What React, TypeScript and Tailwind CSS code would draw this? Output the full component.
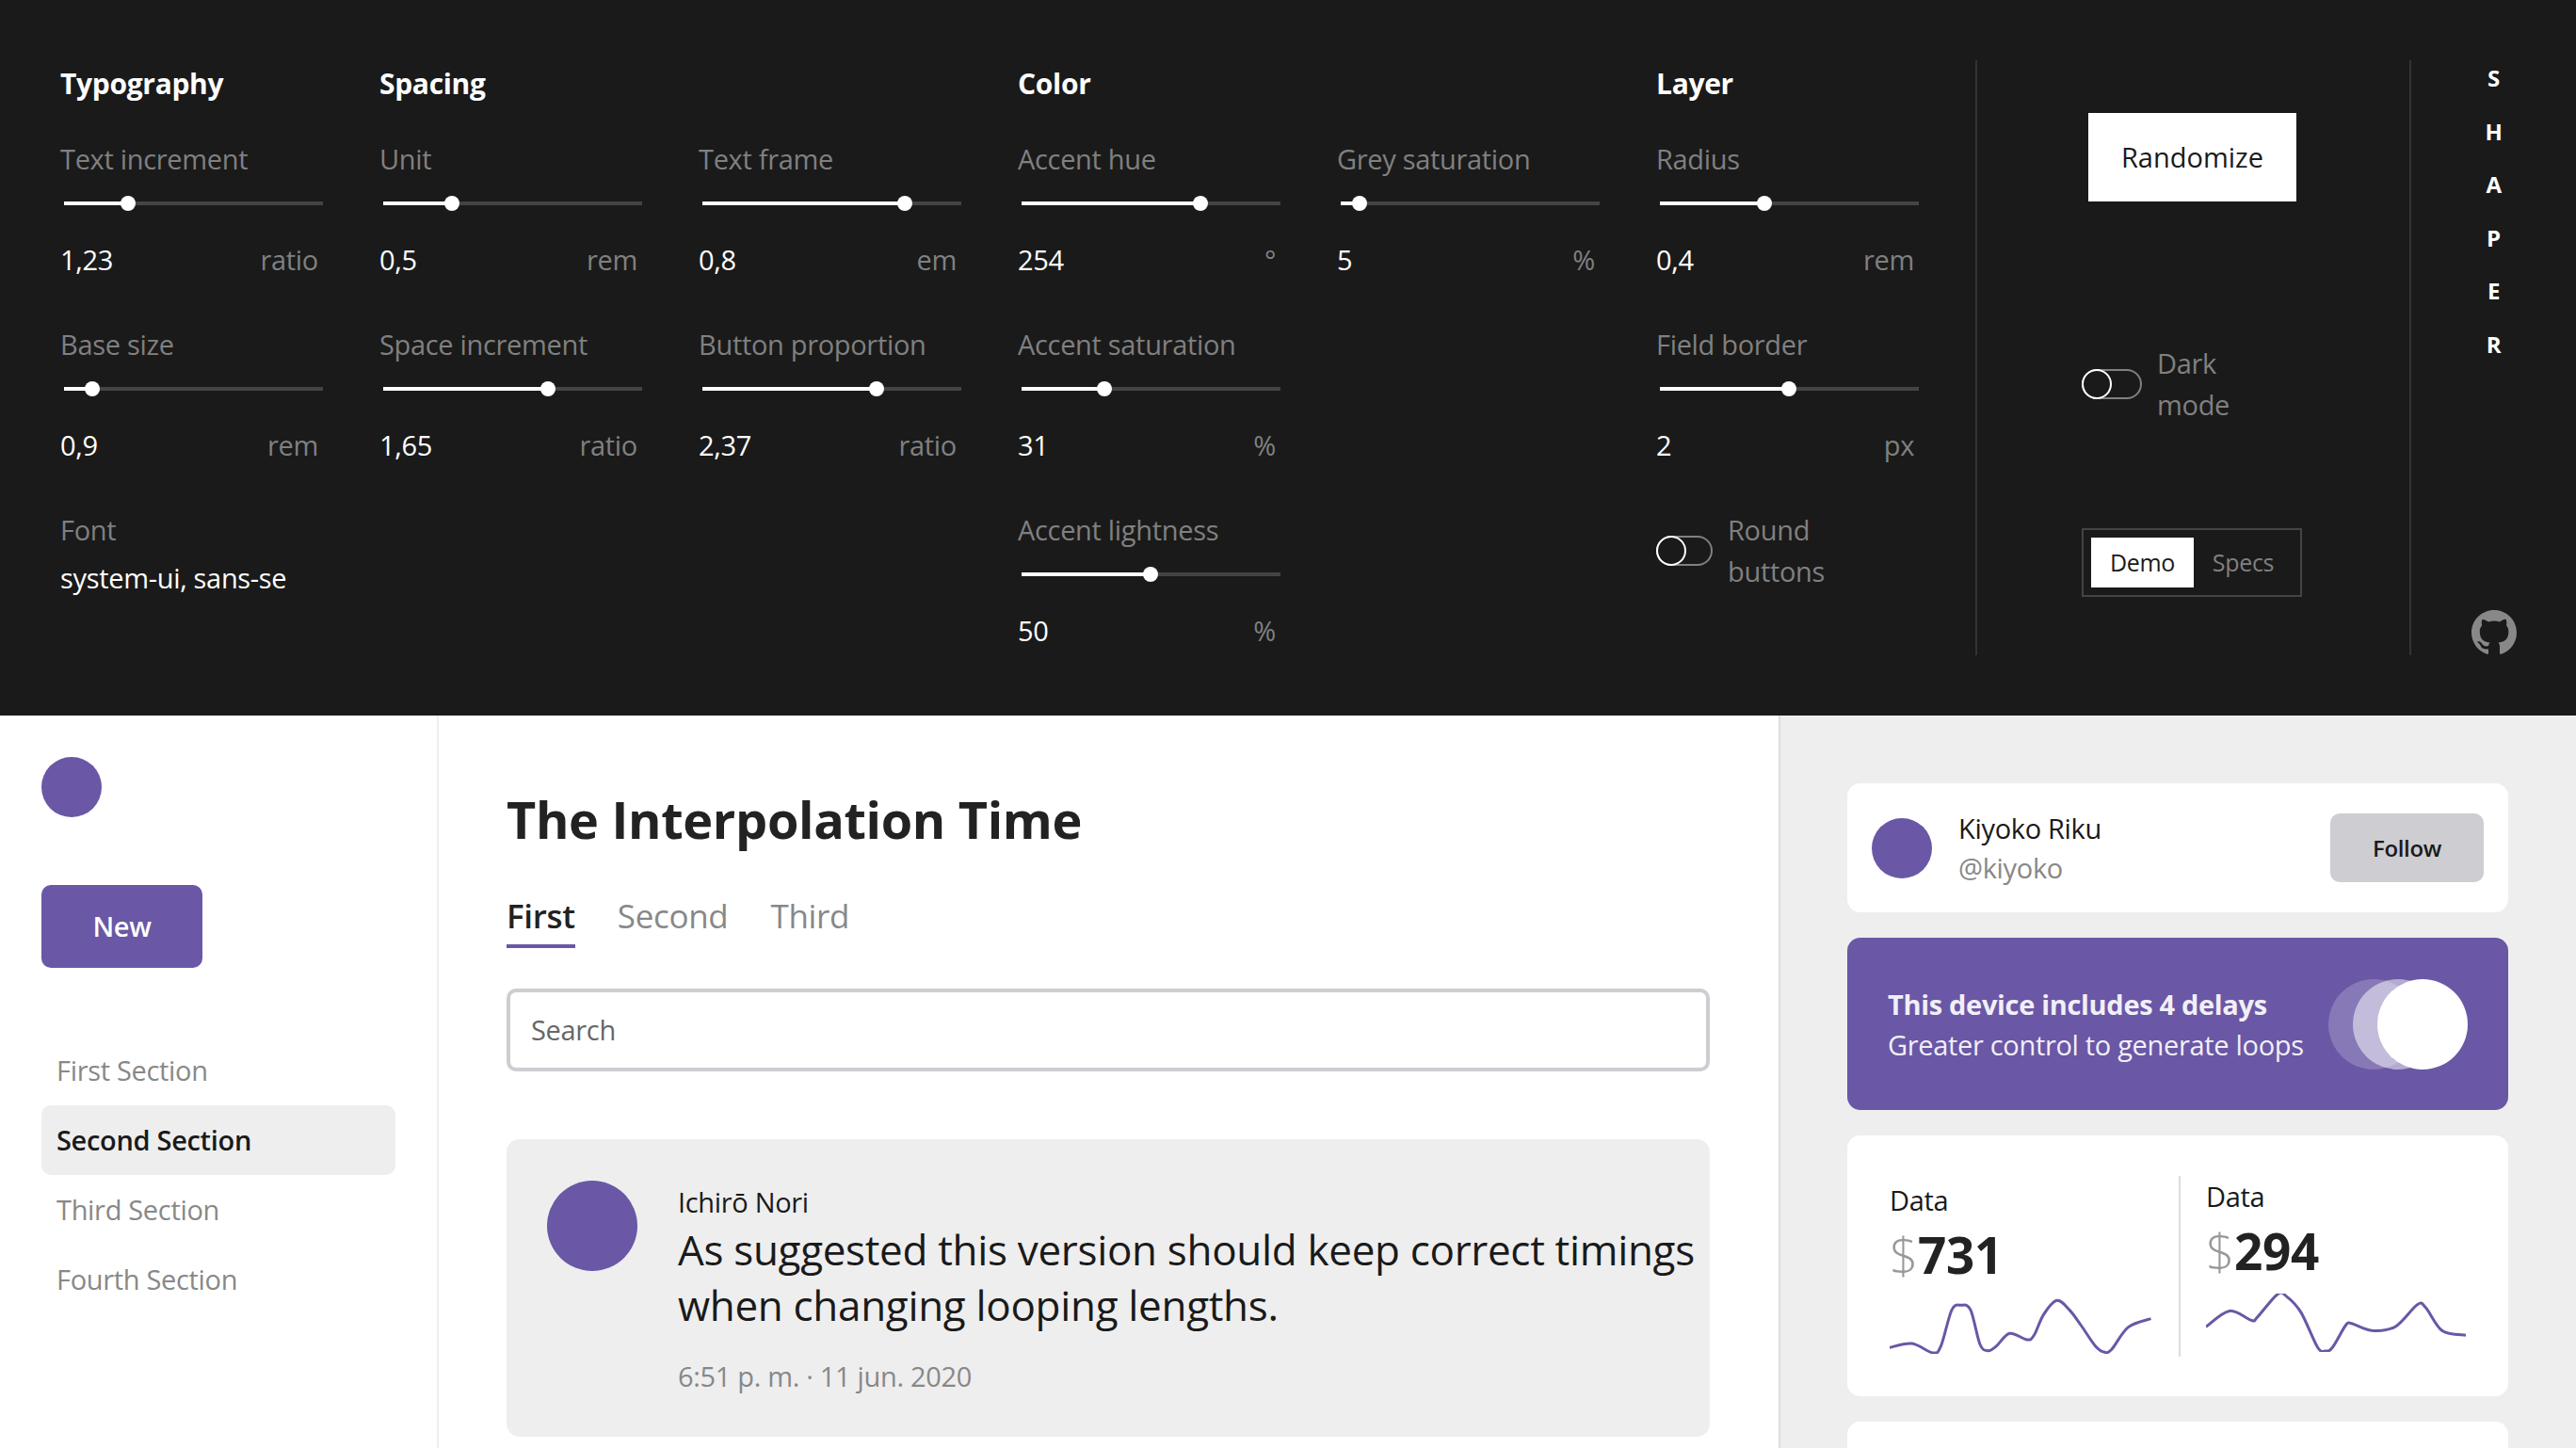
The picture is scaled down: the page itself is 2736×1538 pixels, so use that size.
import React from "react";

type FieldProps = { label: string; value: string; unit: string; thumb: number };

// thumb = pixels from the track start to the thumb centre
function Field({ label, value, unit, thumb }: FieldProps) {
  return (
    <div className="w-[280px] h-[197px]">
      <div className="h-[44px] leading-[44px] text-[29px] text-[#808080] whitespace-nowrap">{label}</div>
      <div className="mt-[17px] ml-[4px] w-[275px] h-[16px] flex items-center">
        <div className="h-[4px] bg-white" style={{ width: thumb }} />
        <div className="w-[16px] h-[16px] rounded-full bg-white -mx-[8px] shrink-0 relative" />
        <div className="h-[4px] bg-[#444] flex-1" />
      </div>
      <div className="mt-[30px] h-[44px] leading-[44px] flex justify-between pr-[6px] text-[29px]">
        <span className="text-white">{value}</span>
        <span className="text-[#808080]">{unit}</span>
      </div>
    </div>
  );
}

function Heading({ children }: { children?: React.ReactNode }) {
  return <div className="h-[40px] mt-[5px] mb-[38px] leading-[40px] text-[30px] font-bold text-white">{children}</div>;
}

function Toggle({ width, lines }: { width: string; lines: string[] }) {
  return (
    <div className="flex items-center gap-[16px]">
      <div className={`${width} h-[32px] rounded-full border-2 border-[#808080]`}>
        <div className="w-[32px] h-[32px] -m-[2px] rounded-full border-2 border-white" />
      </div>
      <div className="text-[29px] leading-[44px] text-[#808080]">
        {lines.map((l) => (
          <div key={l}>{l}</div>
        ))}
      </div>
    </div>
  );
}

function smooth(pts: number[][]) {
  let d = `M${pts[0][0]} ${pts[0][1]}`;
  for (let i = 0; i < pts.length - 1; i++) {
    const p0 = pts[Math.max(i - 1, 0)];
    const p1 = pts[i];
    const p2 = pts[i + 1];
    const p3 = pts[Math.min(i + 2, pts.length - 1)];
    const c1x = p1[0] + (p2[0] - p0[0]) / 6;
    const c1y = p1[1] + (p2[1] - p0[1]) / 6;
    const c2x = p2[0] - (p3[0] - p1[0]) / 6;
    const c2y = p2[1] - (p3[1] - p1[1]) / 6;
    d += ` C${c1x} ${c1y} ${c2x} ${c2y} ${p2[0]} ${p2[1]}`;
  }
  return d;
}

const spark1 = [
  [113, 630], [160, 617], [205, 647], [222, 625], [245, 510], [265, 495], [285, 510], [305, 620], [322, 640],
  [340, 625], [368, 585], [405, 605], [420, 590], [440, 525], [468, 480], [495, 510], [520, 560], [550, 625],
  [570, 645], [585, 635], [620, 565], [668, 538],
];
const spark2 = [
  [783, 575], [833, 525], [880, 555], [892, 545], [935, 472], [955, 480], [985, 530], [1020, 640], [1037, 652],
  [1052, 640], [1080, 570], [1092, 565], [1135, 587], [1185, 575], [1232, 505], [1250, 515], [1285, 588], [1335, 602],
];

function Spark({ pts, box, className }: { pts: number[][]; box: string; className: string }) {
  return (
    <svg viewBox={box} preserveAspectRatio="none" className={className}>
      <path d={smooth(pts)} fill="none" stroke="#6a57a5" strokeWidth="3" vectorEffect="non-scaling-stroke" />
    </svg>
  );
}

function Stat({ value }: { value: string }) {
  return (
    <div>
      <div className="h-[40px] leading-[40px] text-[29px] text-[#1a1a1a]">Data</div>
      <div className="h-[76px] leading-[76px] text-[53px] text-[#222] font-bold whitespace-nowrap">
        <span className="font-light text-[#999]">$</span>
        {value}
      </div>
    </div>
  );
}

const nav = ["First Section", "Second Section", "Third Section", "Fourth Section"];

export default function App() {
  return (
    <div className="w-[2736px] h-[1538px] overflow-hidden bg-white font-['Open_Sans',sans-serif] tracking-[-0.02em]">
      {/* Controls */}
      <section className="h-[760px] bg-[#1a1a1a] flex pl-[64px] pt-[64px]">
        <div className="w-[2034px] grid grid-cols-[repeat(6,339px)] content-start">
          <div>
            <Heading>Typography</Heading>
            <Field label="Text increment" value="1,23" unit="ratio" thumb={68} />
            <Field label="Base size" value="0,9" unit="rem" thumb={30} />
            <div className="h-[44px] leading-[44px] text-[29px] text-[#808080]">Font</div>
            <div className="mt-[7px] h-[44px] leading-[44px] text-[29px] text-white whitespace-nowrap">system-ui, sans-se</div>
          </div>
          <div>
            <Heading>Spacing</Heading>
            <Field label="Unit" value="0,5" unit="rem" thumb={73} />
            <Field label="Space increment" value="1,65" unit="ratio" thumb={175} />
          </div>
          <div>
            <Heading>&nbsp;</Heading>
            <Field label="Text frame" value="0,8" unit="em" thumb={215} />
            <Field label="Button proportion" value="2,37" unit="ratio" thumb={185} />
          </div>
          <div>
            <Heading>Color</Heading>
            <Field label="Accent hue" value="254" unit="°" thumb={190} />
            <Field label="Accent saturation" value="31" unit="%" thumb={88} />
            <Field label="Accent lightness" value="50" unit="%" thumb={137} />
          </div>
          <div>
            <Heading>&nbsp;</Heading>
            <Field label="Grey saturation" value="5" unit="%" thumb={20} />
          </div>
          <div>
            <Heading>Layer</Heading>
            <Field label="Radius" value="0,4" unit="rem" thumb={111} />
            <Field label="Field border" value="2" unit="px" thumb={137} />
            <Toggle width="w-[60px]" lines={["Round", "buttons"]} />
          </div>
        </div>

        <div className="w-[463px] h-[632px] border-x-2 border-[#333] pl-[111px]">
          <button className="ml-[7px] mt-[56px] w-[221px] h-[94px] bg-white text-[#1a1a1a] text-[29px] tracking-normal">Randomize</button>
          <div className="mt-[150px]">
            <Toggle width="w-[64px]" lines={["Dark", "mode"]} />
          </div>
          <div className="mt-[109px] w-[234px] h-[73px] border-2 border-[#444] p-[8px] flex items-stretch text-[25px]">
            <div className="w-[109px] bg-white text-[#1a1a1a] flex items-center justify-center">Demo</div>
            <div className="flex-1 text-[#808080] flex items-center justify-center">Specs</div>
          </div>
        </div>

        <div className="flex-1 h-[632px] flex flex-col items-center text-white text-[24px] font-bold">
          {"SHAPER".split("").map((c) => (
            <div key={c} className="h-[56.5px] leading-[38px]">
              {c}
            </div>
          ))}
          <svg viewBox="0 0 16 16" className="mt-auto w-[48px] h-[48px]" fill="#888">
            <path d="M8 0C3.58 0 0 3.58 0 8c0 3.54 2.29 6.53 5.47 7.59.4.07.55-.17.55-.38 0-.19-.01-.82-.01-1.49-2.01.37-2.53-.49-2.69-.94-.09-.23-.48-.94-.82-1.13-.28-.15-.68-.52-.01-.53.63-.01 1.08.58 1.23.82.72 1.21 1.87.87 2.33.66.07-.52.28-.87.51-1.07-1.78-.2-3.64-.89-3.64-3.95 0-.87.31-1.59.82-2.15-.08-.2-.36-1.02.08-2.12 0 0 .67-.21 2.2.82.64-.18 1.32-.27 2-.27.68 0 1.36.09 2 .27 1.53-1.04 2.2-.82 2.2-.82.44 1.1.16 1.92.08 2.12.51.56.82 1.27.82 2.15 0 3.07-1.87 3.75-3.65 3.95.29.25.54.73.54 1.48 0 1.07-.01 1.93-.01 2.2 0 .21.15.46.55.38A8.013 8.013 0 0016 8c0-4.42-3.58-8-8-8z" />
          </svg>
        </div>
      </section>

      <div className="h-[778px] flex">
        {/* Sidebar */}
        <aside className="w-[466px] border-r-2 border-[#eee] px-[44px] pt-[44px]">
          <div className="w-[64px] h-[64px] rounded-full bg-[#6a57a5]" />
          <button className="mt-[72px] w-[171px] h-[88px] rounded-[10px] bg-[#6a57a5] text-white text-[29px] font-semibold">New</button>
          <nav className="mt-[72px] w-[376px]">
            {nav.map((n, i) => (
              <div
                key={n}
                className={`h-[74px] leading-[74px] px-[16px] rounded-[10px] text-[29px] ${
                  i === 1 ? "bg-[#eee] font-semibold text-[#1a1a1a]" : "text-[#888]"
                }`}
              >
                {n}
              </div>
            ))}
          </nav>
        </aside>

        {/* Main */}
        <main className="w-[1423px] pl-[72px] pr-[73px] pt-[74px]">
          <h1 className="h-[72px] leading-[72px] text-[54px] font-bold text-[#222]">The Interpolation Time</h1>
          <div className="mt-[43px] flex gap-[45px] text-[35px]">
            <div className="h-[58px] leading-[48px] font-semibold text-[#222] border-b-4 border-[#6a57a5]">First</div>
            <div className="h-[58px] leading-[48px] text-[#888]">Second</div>
            <div className="h-[58px] leading-[48px] text-[#888]">Third</div>
          </div>
          <div className="mt-[43px] h-[88px] rounded-[10px] border-4 border-[#cdcdd2] flex items-center pl-[22px] text-[29px] text-[#666]">Search</div>
          <article className="mt-[72px] h-[316px] rounded-[14px] bg-[#eee] flex pl-[43px] pt-[44px]">
            <div className="w-[96px] h-[96px] rounded-full bg-[#6a57a5] shrink-0" />
            <div className="ml-[43px] pt-[3px]">
              <div className="h-[40px] leading-[40px] text-[29px] text-[#1a1a1a]">Ichirō Nori</div>
              <p className="mt-px text-[44px] leading-[59px] text-[#1a1a1a]">
                As suggested this version should keep correct timings
                <br />
                when changing looping lengths.
              </p>
              <div className="mt-[26px] h-[40px] leading-[40px] text-[29px] text-[#888]">6:51 p. m. · 11 jun. 2020</div>
            </div>
          </article>
        </main>

        {/* Right column */}
        <div className="flex-1 bg-[#eee] border-l-2 border-[#ddd] pl-[71px] pt-[72px]">
          <div className="w-[702px] h-[137px] rounded-[14px] bg-white flex items-center px-[26px]">
            <div className="w-[64px] h-[64px] rounded-full bg-[#6a57a5]" />
            <div className="ml-[28px] flex-1 text-[29px] leading-[42px]">
              <div className="text-[#1a1a1a]">Kiyoko Riku</div>
              <div className="text-[#888]">@kiyoko</div>
            </div>
            <button className="w-[163px] h-[73px] rounded-[10px] bg-[#cdcdd2] text-[24px] font-semibold text-[#1a1a1a]">Follow</button>
          </div>

          <div className="mt-[27px] w-[702px] h-[183px] rounded-[14px] bg-[#6a57a5] flex items-center justify-between pl-[43px] pr-[43px] text-[29px] leading-[43px] text-[#f1eff7]">
            <div>
              <div className="font-bold">This device includes 4 delays</div>
              <div>Greater control to generate loops</div>
            </div>
            <div className="flex">
              <div className="w-[96px] h-[96px] rounded-full bg-white/20" />
              <div className="w-[96px] h-[96px] rounded-full bg-white/50 -ml-[70px]" />
              <div className="w-[96px] h-[96px] rounded-full bg-white -ml-[70px]" />
            </div>
          </div>

          <div className="mt-[27px] w-[702px] h-[277px] rounded-[14px] bg-white flex">
            <div className="w-[352px] pl-[45px] pt-[49px]">
              <Stat value="731" />
              <Spark pts={spark1} box="113 470 556 180" className="mt-[7px] w-[278px] h-[60px]" />
            </div>
            <div className="w-[2px] h-[192px] mt-[43px] bg-[#ddd]" />
            <div className="pl-[27px] pt-[45px]">
              <Stat value="294" />
              <Spark pts={spark2} box="783 470 552 185" className="mt-[7px] w-[276px] h-[62px]" />
            </div>
          </div>

          <div className="mt-[27px] w-[702px] h-[120px] rounded-[14px] bg-white" />
        </div>
      </div>
    </div>
  );
}
